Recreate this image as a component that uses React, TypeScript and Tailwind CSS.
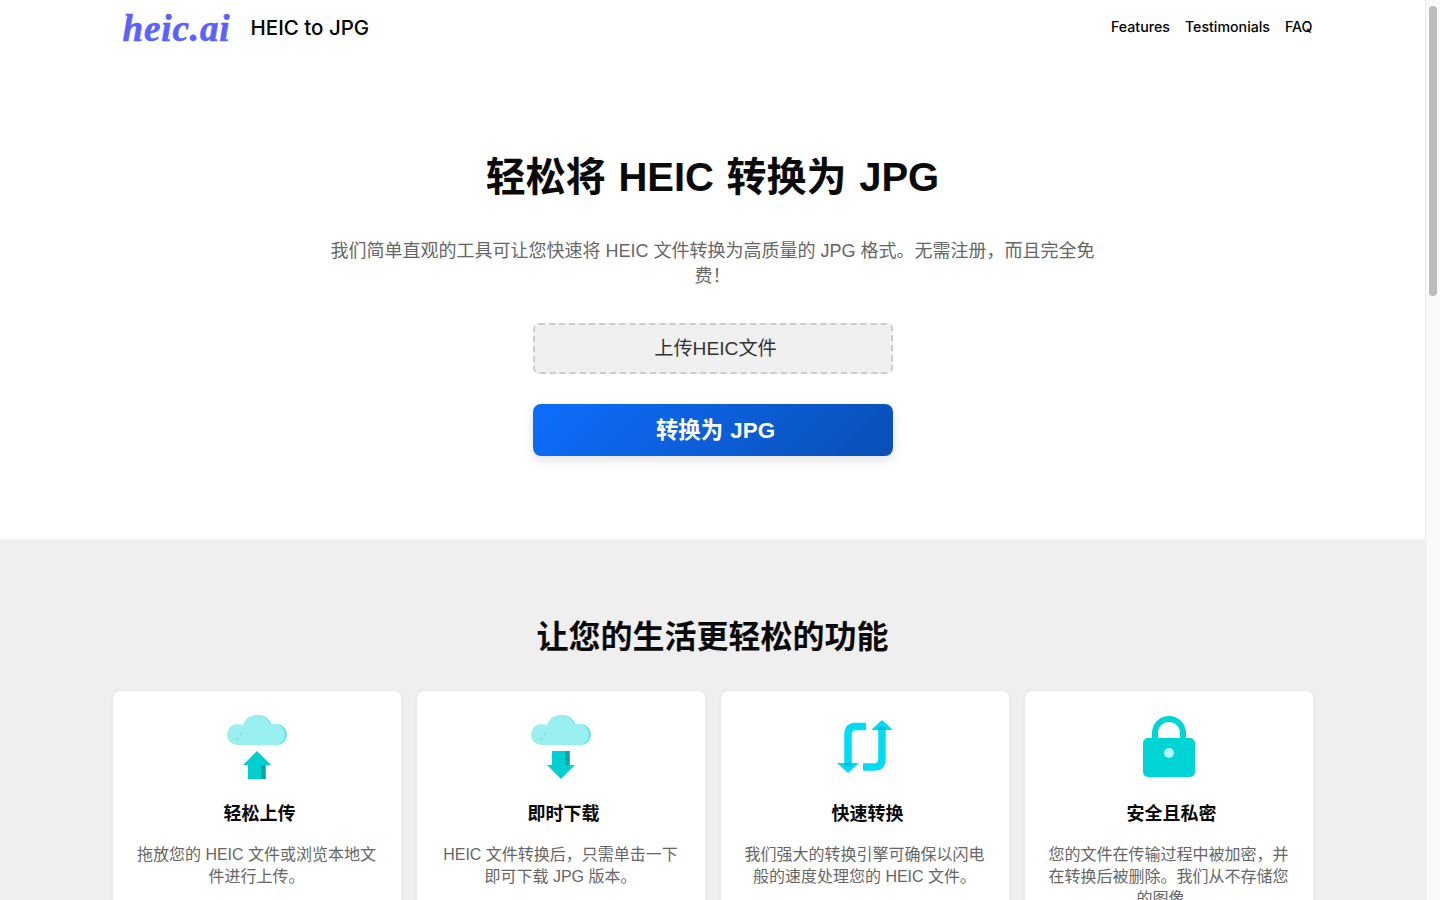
const FONT = "font-['Liberation_Sans','Noto_Sans_CJK_SC',sans-serif]";

function Cloud() {
  return (
    <>
      <circle cx="33" cy="14" r="14" fill="#5fe6e4" />
      <circle cx="51.5" cy="19.5" r="10.5" fill="#5fe6e4" />
      <circle cx="12.5" cy="19.5" r="10.5" fill="#9af0f0" />
      <circle cx="31.5" cy="14" r="14" fill="#9af0f0" />
      <circle cx="49.5" cy="19.5" r="10.5" fill="#9af0f0" />
      <rect x="12" y="14" width="38" height="16" fill="#9af0f0" />
      <circle cx="16" cy="19" r="1" fill="#6fe5e5" />
      <circle cx="12" cy="24" r="1.2" fill="#6fe5e5" />
    </>
  );
}

function UploadIcon() {
  return (
    <svg width="64" height="64" viewBox="0 0 64 64">
      <Cloud />
      <rect x="23" y="50" width="18" height="14" fill="#00cfcf" />
      <rect x="36" y="50" width="4" height="14" fill="#00a8a8" />
      <polygon points="32,36 18,50 46,50" fill="#00cfcf" />
    </svg>
  );
}

function DownloadIcon() {
  return (
    <svg width="64" height="64" viewBox="0 0 64 64">
      <Cloud />
      <rect x="23" y="36" width="18" height="14" fill="#00cfcf" />
      <rect x="36" y="36" width="4" height="14" fill="#00a8a8" />
      <polygon points="18,50 46,50 32,64" fill="#00cfcf" />
    </svg>
  );
}

function ConvertIcon() {
  return (
    <svg width="64" height="64" viewBox="0 0 64 64" fill="none">
      <path d="M33 11.5H23Q15 11.5 15 19.5V48" stroke="#00dcf5" strokeWidth="7.5" />
      <polygon points="4,48 26,48 15,58" fill="#00dcf5" />
      <rect x="11.25" y="48" width="7.5" height="3.5" fill="#00bfe0" />
      <path d="M30 52H41Q49 52 49 44V15" stroke="#00dcf5" strokeWidth="7.5" />
      <polygon points="38,15 60,15 49,5" fill="#00dcf5" />
      <rect x="45.25" y="11.5" width="7.5" height="3.5" fill="#00bfe0" />
    </svg>
  );
}

function LockIcon() {
  return (
    <svg width="64" height="64" viewBox="0 0 64 64" fill="none">
      <path d="M18 24V18a14 14 0 0 1 28 0V24" stroke="#00d5d5" strokeWidth="6" />
      <rect x="6" y="23" width="52" height="39" rx="5" fill="#00d5d5" />
      <circle cx="32" cy="38" r="5" fill="#b5fafa" />
    </svg>
  );
}

const intro = '我们简单直观的工具可让您快速将 HEIC 文件转换为高质量的 JPG 格式。无需注册\uFF0C而且完全免费\uFF01';

const features = [
  { icon: <UploadIcon />, title: '轻松上传', text: '拖放您的 HEIC 文件或浏览本地文件进行上传。' },
  { icon: <DownloadIcon />, title: '即时下载', text: 'HEIC 文件转换后\uFF0C只需单击一下即可下载 JPG 版本。' },
  { icon: <ConvertIcon />, title: '快速转换', text: '我们强大的转换引擎可确保以闪电般的速度处理您的 HEIC 文件。' },
  { icon: <LockIcon />, title: '安全且私密', text: '您的文件在传输过程中被加密\uFF0C并在转换后被删除。我们从不存储您的图像。' },
];

export default function App() {
  return (
    <div className={`flex h-screen overflow-hidden bg-white ${FONT}`}>
      <main className="w-[1425px] shrink-0">
        <header className="mx-auto flex h-14 w-[1200px] items-center justify-between">
          <div className="flex items-center gap-[20px] pl-[10px]">
            <span className="font-['Liberation_Serif',serif] text-[37px] leading-none font-bold tracking-[0.9px] italic text-[#5b62fa] [-webkit-text-stroke:0.6px_#5b62fa]">
              heic.ai
            </span>
            <span className="font-['Inter',sans-serif] text-[20.5px] leading-none font-medium text-black">HEIC to JPG</span>
          </div>
          <nav className="flex gap-[15px] pb-[2px] font-['Inter',sans-serif] text-[14.2px] font-medium text-black">
            <span>Features</span>
            <span>Testimonials</span>
            <span>FAQ</span>
          </nav>
        </header>

        <section className="flex h-[483px] flex-col items-center pt-[94px]">
          <h1 className="text-[40px] leading-[54px] font-bold text-[#0a0a0a] [word-spacing:1.5px]">轻松将 HEIC 转换为 JPG</h1>
          <p className="mt-[35px] w-[780px] text-center text-[18px] leading-[25px] text-[#666]">{intro}</p>
          <div className="mt-[34px] flex h-[51px] w-[360px] items-center justify-center rounded-md border-2 border-dashed border-[#ccc] bg-[#f0f0f0] pt-[2px] pl-[6px] text-[19.2px] text-[#333]">
            上传HEIC文件
          </div>
          <button className="mt-[30px] h-[52px] w-[360px] rounded-lg bg-[linear-gradient(135deg,#0d6efd,#0a4fb5)] pt-[2px] pl-[6px] text-[22.4px] font-bold text-white shadow-[0_4px_12px_rgba(0,0,0,0.12)] [word-spacing:1px]">
            转换为 JPG
          </button>
        </section>

        <section className="bg-[#efefef] pt-[76px]">
          <h2 className="text-center text-[32px] leading-[44px] font-bold text-[#0a0a0a]">让您的生活更轻松的功能</h2>
          <div className="mx-auto mt-[32px] grid w-[1200px] grid-cols-4 gap-4">
            {features.map((f) => (
              <div key={f.title} className="flex flex-col items-center rounded-lg bg-white px-6 pt-6 pb-6 shadow-[0_2px_8px_rgba(0,0,0,0.05)]">
                {f.icon}
                <h3 className="mt-[23px] pl-[6px] text-[18px] leading-[25px] font-bold text-[#0a0a0a]">{f.title}</h3>
                <p className="mt-[17px] text-center text-[16px] leading-[22px] text-[#666]">{f.text}</p>
              </div>
            ))}
          </div>
        </section>
      </main>

      <aside className="w-[15px] shrink-0 border-l border-[#e8e8e8] bg-[#fafafa] pt-[6px] pl-[3px]">
        <div className="h-[290px] w-[8px] rounded-full bg-[#bcbcbc]" />
      </aside>
    </div>
  );
}
